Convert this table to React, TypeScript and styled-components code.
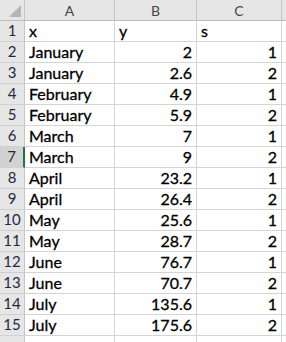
import React from 'react';
import styled, { createGlobalStyle } from 'styled-components';

const GlobalStyle = createGlobalStyle`
  html, body {
    margin: 0;
    padding: 0;
    background: #ffffff;
    overflow: hidden;
  }
  body {
    font-family: Lato, "Liberation Sans", sans-serif;
  }
`;

const rows: [string, string, string][] = [
  ['January', '2', '1'],
  ['January', '2.6', '2'],
  ['February', '4.9', '1'],
  ['February', '5.9', '2'],
  ['March', '7', '1'],
  ['March', '9', '2'],
  ['April', '23.2', '1'],
  ['April', '26.4', '2'],
  ['May', '25.6', '1'],
  ['May', '28.7', '2'],
  ['June', '76.7', '1'],
  ['June', '70.7', '2'],
  ['July', '135.6', '1'],
  ['July', '175.6', '2'],
];

const SELECTED_ROW = 7;

const Sheet = styled.div`
  display: grid;
  grid-template-columns: 25px 90px 82px 85px 1fr;
  grid-auto-rows: 21px;
  width: 286px;
  height: 342px;
  overflow: hidden;
`;

const Corner = styled.div`
  position: relative;
  background: #e6e6e6;
  border-right: 1px solid #c6c6c6;
  border-bottom: 1px solid #bdbdbd;
  box-sizing: border-box;

  &::after {
    content: '';
    position: absolute;
    right: 3px;
    bottom: 3px;
    width: 0;
    height: 0;
    border-left: 12px solid transparent;
    border-bottom: 12px solid #b5b5b5;
  }
`;

const ColHead = styled.div`
  display: flex;
  align-items: center;
  justify-content: center;
  background: #e6e6e6;
  border-right: 1px solid #c6c6c6;
  border-bottom: 1px solid #bdbdbd;
  box-sizing: border-box;
  font-size: 14px;
  color: #444444;
`;

const RowHead = styled.div<{ $active?: boolean }>`
  display: flex;
  align-items: flex-end;
  justify-content: center;
  padding-bottom: 2px;
  background: ${(p) => (p.$active ? '#d2d2d2' : '#e6e6e6')};
  border-right: ${(p) => (p.$active ? '2px solid #217346' : '1px solid #c6c6c6')};
  border-bottom: 1px solid #d0d0d0;
  box-sizing: border-box;
  font-size: 15px;
  line-height: 17px;
  color: #1e2a3c;
`;

const Cell = styled.div<{ $num?: boolean }>`
  display: flex;
  align-items: flex-end;
  justify-content: ${(p) => (p.$num ? 'flex-end' : 'flex-start')};
  padding: 0 4px 2px ${(p) => (p.$num ? '0' : '4px')};
  border-right: 1px solid #d4d4d4;
  border-bottom: 1px solid #d4d4d4;
  box-sizing: border-box;
  font-size: 16px;
  line-height: 17px;
  color: #000000;
  -webkit-text-stroke: 0.3px #000000;
  white-space: nowrap;
  overflow: hidden;
`;

export default function App() {
  return (
    <>
      <GlobalStyle />
      <Sheet>
        <Corner />
        <ColHead>A</ColHead>
        <ColHead>B</ColHead>
        <ColHead>C</ColHead>
        <ColHead />

        <RowHead>1</RowHead>
        <Cell>x</Cell>
        <Cell>y</Cell>
        <Cell>s</Cell>
        <Cell />

        {rows.map(([x, y, s], i) => {
          const n = i + 2;
          return (
            <React.Fragment key={n}>
              <RowHead $active={n === SELECTED_ROW}>{n}</RowHead>
              <Cell>{x}</Cell>
              <Cell $num>{y}</Cell>
              <Cell $num>{s}</Cell>
              <Cell />
            </React.Fragment>
          );
        })}

        <RowHead />
        <Cell />
        <Cell />
        <Cell />
        <Cell />
      </Sheet>
    </>
  );
}
